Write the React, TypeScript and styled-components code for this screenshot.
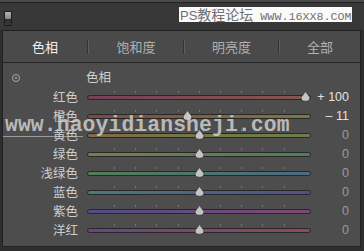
import styled, { createGlobalStyle } from "styled-components";

const GlobalStyle = createGlobalStyle`
  html, body {
    margin: 0;
    padding: 0;
    background: #2e2e2e;
  }
  body {
    font-family: "Noto Sans CJK SC", "Liberation Sans", sans-serif;
  }
`;

const Panel = styled.div`
  position: relative;
  width: 364px;
  height: 251px;
  overflow: hidden;
  background: #2e2e2e;
  display: flex;
  flex-direction: column;
`;

const TopBar = styled.div`
  height: 28px;
  flex-shrink: 0;
  border-top: 2px solid #4a4a4a;
  background: #383838;
  box-shadow: inset 0 1px 0 #222;
  display: flex;
  align-items: center;
  padding-left: 4px;
`;

const Toggle = styled.div`
  width: 6px;
  height: 13px;
  border: 1px solid #1c1c1c;
  border-radius: 1px;
  background: linear-gradient(180deg, #b4b4b4 0%, #8a8a8a 50%, #2c2c2c 52%, #3a3a3a 100%);
  margin-top: 5px;
`;

const Frame = styled.div`
  flex: 1;
  margin: 0 3px 4px 2px;
  border: 1px solid #222;
  border-top-color: #1f1f1f;
  display: flex;
  flex-direction: column;
  background: #4d4d4d;
`;

const TabBar = styled.div`
  height: 31px;
  display: flex;
  align-items: center;
  background: #4a4a4a;
  border-bottom: 1px solid #262626;
`;

const Tab = styled.div<{ w?: number; active?: boolean }>`
  ${({ w }) => (w ? `width: ${w}px;` : "flex: 1;")}
  text-align: center;
  font-size: 13px;
  line-height: 31px;
  color: ${({ active }) => (active ? "#f0f0f0" : "#b0b0b0")};
`;

const Sep = styled.div`
  width: 1px;
  height: 14px;
  background: #333;
  border-right: 1px solid #5e5e5e;
`;

const Content = styled.div`
  flex: 1;
  padding: 2px 0 6px;
  display: flex;
  flex-direction: column;
`;

const Row = styled.div<{ h: number }>`
  display: grid;
  grid-template-columns: 75px 9px 224px 38px;
  align-items: center;
  height: ${({ h }) => h}px;
`;

const Target = styled.div`
  justify-self: start;
  margin-left: 9px;
  margin-top: 4px;
  width: 6px;
  height: 6px;
  border-radius: 50%;
  border: 1px solid #a8a8a8;
  display: flex;
  align-items: center;
  justify-content: center;

  &::after {
    content: "";
    width: 2px;
    height: 2px;
    border-radius: 50%;
    background: #a8a8a8;
  }
`;

const Title = styled.div`
  grid-column: 3;
  margin-left: -1px;
  font-size: 12.5px;
  color: #cfcfcf;
`;

const Label = styled.div`
  text-align: right;
  font-size: 12.5px;
  color: #cdcdcd;
  line-height: 19px;
`;

const TrackWrap = styled.div`
  grid-column: 3;
  position: relative;
  height: 19px;
  display: flex;
  align-items: center;
`;

const Track = styled.div<{ from: string; to: string }>`
  width: 100%;
  height: 3px;
  border: 1px solid #282828;
  border-radius: 3px;
  margin-top: 1px;
  background: linear-gradient(90deg, ${({ from }) => from}, ${({ to }) => to});
`;

const Ticks = styled.div`
  position: absolute;
  left: 27px;
  top: 4px;
  width: 171px;
  height: 2px;
  background: repeating-linear-gradient(
    90deg,
    #767676 0 1px,
    transparent 1px 21.2px
  );
`;

const Thumb = styled.svg`
  position: absolute;
  top: 4px;
  width: 11px;
  height: 11px;
`;

const Value = styled.div<{ dim?: boolean }>`
  grid-column: 4;
  display: flex;
  justify-content: flex-end;
  white-space: nowrap;
  font-family: "Liberation Sans", sans-serif;
  font-size: 12.5px;
  color: ${({ dim }) => (dim ? "#9a9a9a" : "#e2e2e2")};
`;

const Stamp = styled.div`
  position: absolute;
  left: 179px;
  top: 7px;
  width: 172px;
  height: 15px;
  background: #fafafa;
  color: #707070;
  font-family: "Liberation Mono", monospace;
  font-size: 11.7px;
  line-height: 15px;
  white-space: nowrap;
  padding-left: 1px;

  b {
    font-weight: normal;
    font-family: "Liberation Sans", sans-serif;
    font-size: 13px;
  }

  span {
    font-family: "Noto Sans CJK SC", sans-serif;
    font-size: 14px;
  }
`;

const Watermark = styled.div`
  position: absolute;
  left: 5px;
  top: 114px;
  font-family: "Liberation Mono", monospace;
  font-weight: bold;
  font-size: 21.4px;
  line-height: 22px;
  color: rgba(205, 205, 205, 0.85);
  white-space: nowrap;
  letter-spacing: 0.1px;
`;

const WatermarkLine = styled.div`
  position: absolute;
  left: 3px;
  top: 136px;
  width: 80px;
  height: 1px;
  background: rgba(190, 190, 190, 0.7);
`;

type Slider = { name: string; value: number; from: string; to: string };

const sliders: Slider[] = [
  { name: "红色", value: 100, from: "#74405a", to: "#84584a" },
  { name: "橙色", value: -11, from: "#7a4a42", to: "#807648" },
  { name: "黄色", value: 0, from: "#806c48", to: "#6a7e4a" },
  { name: "绿色", value: 0, from: "#767e50", to: "#4e7e58" },
  { name: "浅绿色", value: 0, from: "#4f7e56", to: "#4a6a84" },
  { name: "蓝色", value: 0, from: "#4a7a7a", to: "#524e88" },
  { name: "紫色", value: 0, from: "#504c86", to: "#804874" },
  { name: "洋红", value: 0, from: "#6a4482", to: "#8c4a5c" },
];

function formatValue(v: number) {
  if (v > 0) return `+ ${v}`;
  if (v < 0) return `– ${Math.abs(v)}`;
  return "0";
}

export default function App() {
  return (
    <Panel>
      <GlobalStyle />
      <TopBar>
        <Toggle />
      </TopBar>
      <Frame>
        <TabBar>
          <Tab w={84} active>色相</Tab>
          <Sep />
          <Tab w={94}>饱和度</Tab>
          <Sep />
          <Tab w={93}>明亮度</Tab>
          <Sep />
          <Tab>全部</Tab>
        </TabBar>
        <Content>
          <Row h={22}>
            <Target />
            <Title>色相</Title>
          </Row>
          {sliders.map((s) => (
            <Row h={19} key={s.name}>
              <Label>{s.name}</Label>
              <TrackWrap>
                <Track from={s.from} to={s.to} />
                <Ticks />
                <Thumb
                  viewBox="0 0 11 11"
                  style={{ left: 6 + ((s.value + 100) / 200) * 212 - 5.5 }}
                >
                  <path
                    d="M5.5 0.5 L9.8 6.2 Q10.4 10.3 5.5 10.3 Q0.6 10.3 1.2 6.2 Z"
                    fill="#c4c4c4"
                    stroke="#3a3a3a"
                    strokeWidth="0.8"
                  />
                </Thumb>
              </TrackWrap>
              <Value dim={s.value === 0}>{formatValue(s.value)}</Value>
            </Row>
          ))}
        </Content>
      </Frame>
      <Stamp>
        <b>PS</b>
        <span>教程论坛</span> WWW.16XX8.COM
      </Stamp>
      <WatermarkLine />
      <Watermark>www.haoyidiansheji.com</Watermark>
    </Panel>
  );
}
